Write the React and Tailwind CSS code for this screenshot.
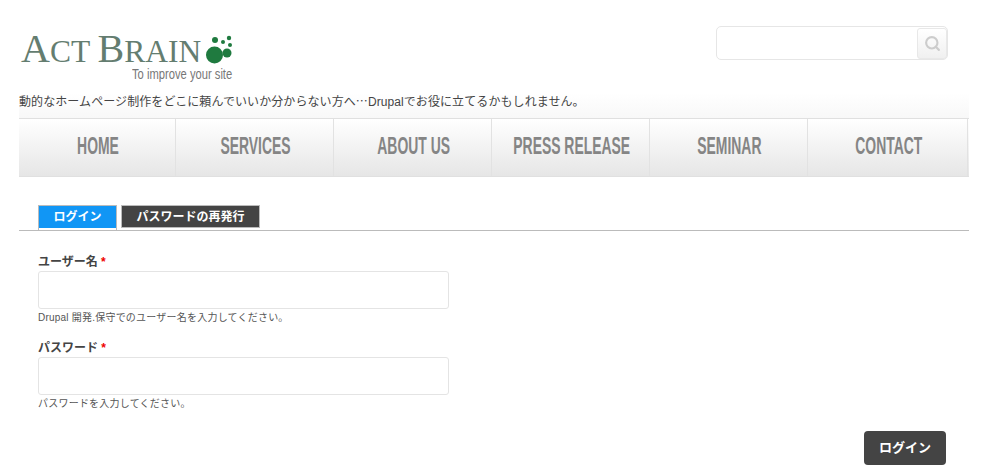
import { Search } from 'lucide-react';

const navItems = ['HOME', 'SERVICES', 'ABOUT US', 'PRESS RELEASE', 'SEMINAR', 'CONTACT'];
const navWidths = ['w-[157px]', 'w-[158px]', 'w-[158px]', 'w-[158px]', 'w-[158px]', 'w-[160px]'];
const jp = { fontFamily: '"Liberation Sans", "Noto Sans CJK JP", sans-serif' };

function Logo() {
  return (
    <div className="relative w-[230px] h-[58px]">
      <div className="pl-[2px] flex items-start h-[32px]">
        <span className="block text-[#647d70] leading-[32px] whitespace-nowrap" style={{ fontFamily: '"Liberation Serif", serif' }}>
          <span className="text-[40px] leading-[32px]">A</span>
          <span className="text-[31.5px] leading-[32px]">CT </span>
          <span className="text-[40px] leading-[32px]">B</span>
          <span className="text-[31.5px] leading-[32px]">RAIN</span>
        </span>
      </div>
      <svg className="absolute left-[187px] top-[2px]" width="30" height="32" viewBox="0 0 30 32" fill="#1f7a3f">
        <circle cx="8.5" cy="20" r="8.5" />
        <circle cx="21" cy="18" r="4.5" />
        <circle cx="9" cy="5" r="3" />
        <circle cx="17" cy="7" r="2" />
        <circle cx="23" cy="3" r="2.2" />
        <circle cx="24" cy="10" r="2" />
      </svg>
      <div className="absolute left-[113px] top-[33px] text-[14px] leading-[16px] text-[#777] whitespace-nowrap origin-left scale-x-[0.8]" style={{ fontFamily: '"Liberation Sans", sans-serif' }}>
        To improve your site
      </div>
    </div>
  );
}

export default function App() {
  return (
    <div className="bg-white px-[19px] overflow-hidden text-[#444] h-[469px]" style={jp}>
      {/* Header */}
      <header className="h-[93px] pt-[26px] flex justify-between">
        <div className="pt-[7px]"><Logo /></div>
        <div className="mr-[21px] w-[232px] h-[34px] border border-[#e6e6e6] rounded-[5px] flex justify-end pt-[1px]">
          <button className="w-[30px] h-[31px] bg-gradient-to-b from-white to-[#f0f0f0] border border-[#e8e8e8] rounded-[3px] flex items-center justify-center">
            <Search size={17} strokeWidth={3} className="text-[#cccccc]" />
          </button>
        </div>
      </header>

      <div className="h-[25px] bg-gradient-to-b from-white to-[#f8f8f8] text-[12px] leading-[15px] tracking-[0.085px] text-[#444] whitespace-nowrap">
        動的なホームページ制作をどこに頼んでいいか分からない方へ<span style={{ fontFamily: '"Noto Sans CJK JP", sans-serif' }}>…</span>Drupalでお役に立てるかもしれません。
      </div>

      {/* Main nav */}
      <nav className="h-[59px] border-t border-b border-[#e0e0e0] bg-gradient-to-b from-white to-[#e6e6e6] flex">
        {navItems.map((item, i) => (
          <a key={item} className={`${navWidths[i]} border-r border-[#e2e2e2] flex items-center justify-center pb-[3px] pl-[2px] text-[#858585] text-[24px] font-bold`} style={{ fontFamily: '"Liberation Sans", sans-serif' }}>
            <span className="inline-block scale-x-[0.58] whitespace-nowrap">{item}</span>
          </a>
        ))}
      </nav>

      {/* Login form */}
      <main className="pt-[28px]">
        <ul className="flex items-start gap-[4px] pl-[19px] h-[26px] border-b border-[#bbb]">
          <li className="w-[79px] h-[25px] border-t border-x border-[#bbb]">
            <div className="h-[22px] bg-[#1196f5] flex items-center justify-center text-white text-[12px] font-bold">ログイン</div>
          </li>
          <li className="w-[139px] h-[23px] bg-[#444] border border-[#bbb] flex items-center justify-center text-white text-[12px] font-bold">パスワードの再発行</li>
        </ul>

        <div className="pl-[19px] pt-[23px]">
          <label className="block text-[12px] font-bold leading-[16px] text-[#444]">ユーザー名 <span className="text-[#e00]">*</span></label>
          <input className="block mt-[1px] w-[411px] h-[38px] border border-[#e4e4e4] rounded-[3px] bg-white" />
          <p className="mt-[2px] text-[10px] leading-[14px] tracking-[0.22px] text-[#555]">Drupal 開発.保守でのユーザー名を入力してください。</p>

          <label className="block mt-[15px] text-[12px] font-bold leading-[16px] text-[#444]">パスワード <span className="text-[#e00]">*</span></label>
          <input className="block mt-[1px] w-[411px] h-[38px] border border-[#e4e4e4] rounded-[3px] bg-white" />
          <p className="mt-[2px] text-[10px] leading-[14px] tracking-[0.22px] text-[#555]">パスワードを入力してください。</p>
        </div>

        <div className="flex justify-end pr-[23px] pt-[20px]">
          <button className="w-[82px] h-[34px] rounded-[4px] bg-[#444] text-white text-[13px] font-bold">ログイン</button>
        </div>
      </main>
    </div>
  );
}
